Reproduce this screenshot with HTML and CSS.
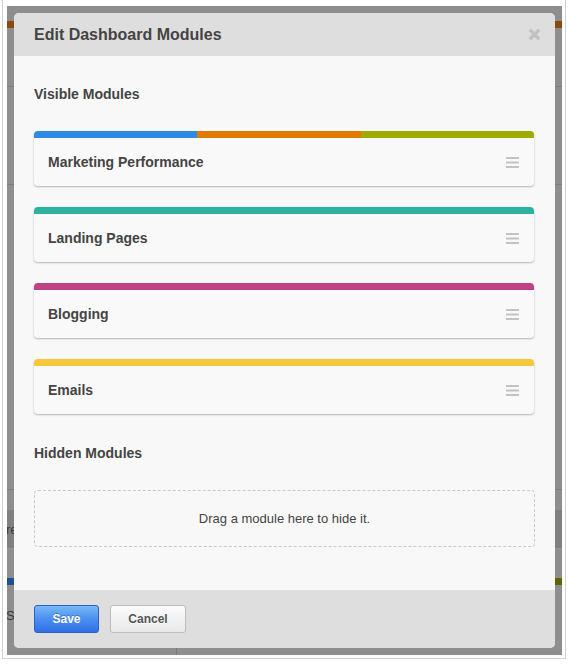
FILE: index.html
```html
<!DOCTYPE html>
<html>
<head>
<meta charset="utf-8">
<title>Edit Dashboard Modules</title>
<link rel="stylesheet" href="styles.css">
</head>
<body>
<div class="frame">
  <div class="window">
    <div class="backdrop">
      <div class="bg-space-top"></div>
      <div class="bg-nav"></div>
      <div class="bg-sec bg-sec-1"></div>
      <div class="bg-sec bg-sec-2"></div>
      <div class="bg-sec bg-sec-3"></div>
      <div class="bg-gap-1"></div>
      <div class="bg-band"><span class="bg-text">re</span></div>
      <div class="bg-gap-2"></div>
      <div class="bg-stripe"></div>
      <div class="bg-rest">
        <div class="bg-col"><span class="bg-text bg-text-2">Se</span></div>
      </div>

      <div class="modal">
        <div class="modal-header">
          <h2 class="modal-title">Edit Dashboard Modules</h2>
          <svg class="close" width="13" height="13" viewBox="0 0 13 13">
            <path d="M1.8 1.8 L11.2 11.2 M11.2 1.8 L1.8 11.2" stroke="#c2c2c2" stroke-width="3.4" stroke-linecap="butt" fill="none"/>
          </svg>
        </div>
        <div class="modal-body">
          <h3 class="section-title">Visible Modules</h3>
          <div class="cards">
            <div class="card">
              <div class="card-bar bar-multi"><span class="seg seg-blue"></span><span class="seg seg-orange"></span><span class="seg seg-olive"></span></div>
              <div class="card-body">
                <span class="card-name">Marketing Performance</span>
                <svg class="grip" width="13" height="11" viewBox="0 0 13 11"><rect x="0" y="0" width="13" height="2" fill="#c3c3c3"/><rect x="0" y="4.5" width="13" height="2" fill="#c3c3c3"/><rect x="0" y="9" width="13" height="2" fill="#c3c3c3"/></svg>
              </div>
            </div>
            <div class="card">
              <div class="card-bar bar-teal"></div>
              <div class="card-body">
                <span class="card-name">Landing Pages</span>
                <svg class="grip" width="13" height="11" viewBox="0 0 13 11"><rect x="0" y="0" width="13" height="2" fill="#c3c3c3"/><rect x="0" y="4.5" width="13" height="2" fill="#c3c3c3"/><rect x="0" y="9" width="13" height="2" fill="#c3c3c3"/></svg>
              </div>
            </div>
            <div class="card">
              <div class="card-bar bar-magenta"></div>
              <div class="card-body">
                <span class="card-name">Blogging</span>
                <svg class="grip" width="13" height="11" viewBox="0 0 13 11"><rect x="0" y="0" width="13" height="2" fill="#c3c3c3"/><rect x="0" y="4.5" width="13" height="2" fill="#c3c3c3"/><rect x="0" y="9" width="13" height="2" fill="#c3c3c3"/></svg>
              </div>
            </div>
            <div class="card">
              <div class="card-bar bar-yellow"></div>
              <div class="card-body">
                <span class="card-name">Emails</span>
                <svg class="grip" width="13" height="11" viewBox="0 0 13 11"><rect x="0" y="0" width="13" height="2" fill="#c3c3c3"/><rect x="0" y="4.5" width="13" height="2" fill="#c3c3c3"/><rect x="0" y="9" width="13" height="2" fill="#c3c3c3"/></svg>
              </div>
            </div>
          </div>
          <h3 class="section-title section-hidden">Hidden Modules</h3>
          <div class="dropzone">Drag a module here to hide it.</div>
        </div>
        <div class="modal-footer">
          <button class="btn btn-primary">Save</button>
          <button class="btn btn-default">Cancel</button>
        </div>
      </div>
    </div>
  </div>
</div>
</body>
</html>
```

FILE: styles.css
```css
html, body {
  margin: 0;
  padding: 0;
  background: #ffffff;
}

body {
  font-family: "Liberation Sans", Arial, sans-serif;
  color: #444444;
}

.frame {
  width: 569px;
  height: 664px;
  box-sizing: border-box;
  padding: 0 3px 5px 2px;
}

.window {
  height: 100%;
  box-sizing: border-box;
  border: 1px solid #d2d2d2;
  border-top: none;
  padding: 6px 3px 3px 4px;
}

.backdrop {
  position: relative;
  height: 649px;
  overflow: hidden;
  background: #8e8e8e;
  display: flex;
  flex-direction: column;
}

.bg-space-top { height: 15px; flex: none; }
.bg-nav { height: 7px; background: #8b4a0c; flex: none; }
.bg-sec { flex: none; border-bottom: 1px solid #7e7e7e; }
.bg-sec-1 { height: 58px; }
.bg-sec-2 { height: 97px; }
.bg-sec-3 { height: 304px; }
.bg-gap-1 { height: 20px; flex: none; }
.bg-band {
  height: 38px;
  flex: none;
  background: #808080;
  display: flex;
  align-items: center;
  border-bottom: 1px solid #969696;
}
.bg-gap-2 { height: 29px; flex: none; }
.bg-stripe {
  height: 7px;
  flex: none;
  background: linear-gradient(to right, #1c5290 0 33%, #8b4a0c 33% 66%, #5e6500 66% 100%);
}
.bg-rest { flex: 1; display: flex; }
.bg-col {
  width: 169px;
  border-right: 1px solid #7a7a7a;
  padding-top: 21px;
}
.bg-text {
  font-size: 13px;
  color: #3a3a3a;
  margin-left: -1px;
}

.modal {
  position: absolute;
  left: 7px;
  top: 7px;
  width: 541px;
  height: 635px;
  border-radius: 5px;
  overflow: hidden;
  background: #f8f8f8;
  display: flex;
  flex-direction: column;
}

.modal-header {
  height: 43px;
  flex: none;
  background: #dedede;
  display: flex;
  align-items: center;
  justify-content: space-between;
  padding: 0 14px 0 20px;
}

.modal-title {
  margin: 0;
  font-size: 16px;
  font-weight: bold;
  color: #444444;
  line-height: 20px;
}

.close { display: block; }

.modal-body {
  flex: 1;
  padding: 28px 20px 0 20px;
}

.section-title {
  margin: 0 0 27px 0;
  font-size: 14px;
  line-height: 20px;
  font-weight: bold;
  color: #444444;
}

.section-hidden {
  margin-top: 29px;
}

.cards {
  display: flex;
  flex-direction: column;
  gap: 21px;
}

.card {
  width: 500px;
  background: #f9f9f9;
  border-radius: 4px;
  overflow: hidden;
  box-shadow: 0 1px 2px rgba(0, 0, 0, 0.28);
}

.card-bar {
  height: 7px;
}

.bar-multi { display: flex; }
.seg { flex: none; }
.seg-blue { width: 163px; background: #2f8ae6; }
.seg-orange { width: 164px; background: #e27a02; }
.seg-olive { flex: 1; background: #9dab00; }
.bar-teal { background: #2fb3a0; }
.bar-magenta { background: #c04286; }
.bar-yellow { background: #f7c83b; }

.card-body {
  height: 48px;
  display: flex;
  align-items: center;
  justify-content: space-between;
  padding: 0 15px 0 14px;
}

.card-name {
  font-size: 14px;
  font-weight: bold;
  color: #444444;
}

.grip { display: block; }

.dropzone {
  height: 57px;
  box-sizing: border-box;
  border: 1px dashed #c9c9c9;
  border-radius: 4px;
  display: flex;
  align-items: center;
  justify-content: center;
  font-size: 13px;
  color: #444444;
}

.modal-footer {
  height: 58px;
  box-sizing: border-box;
  flex: none;
  background: #dedede;
  padding: 15px 20px;
  display: flex;
  gap: 11px;
}

.btn {
  height: 28px;
  box-sizing: border-box;
  border-radius: 3px;
  font-family: "Liberation Sans", Arial, sans-serif;
  font-size: 12px;
  font-weight: bold;
  padding: 0;
  margin: 0;
}

.btn-primary {
  width: 65px;
  color: #ffffff;
  background: linear-gradient(to bottom, #79b9f7 0%, #4a8ff0 50%, #2f70e6 100%);
  border: 1px solid #2b62c8;
  text-shadow: 0 -1px 0 rgba(0, 0, 0, 0.25);
}

.btn-default {
  width: 76px;
  color: #555555;
  background: linear-gradient(to bottom, #fbfbfb 0%, #e9e9e9 100%);
  border: 1px solid #bcbcbc;
  text-shadow: 0 1px 0 #ffffff;
}
```
